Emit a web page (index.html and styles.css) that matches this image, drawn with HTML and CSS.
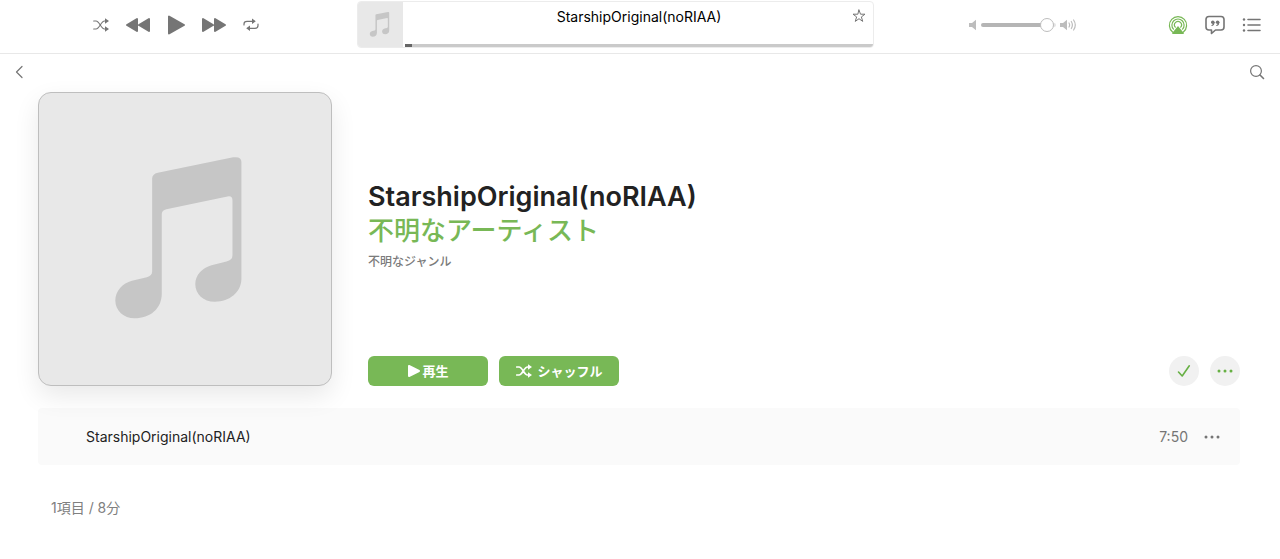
FILE: index.html
```html
<!DOCTYPE html>
<html lang="ja">
<head>
    <meta charset="UTF-8">
    <meta name="viewport" content="width=device-width, initial-scale=1.0">
    <title>StarshipOriginal(noRIAA)</title>
    <link rel="stylesheet" href="styles.css">
</head>
<body>

<svg class="symbols" width="0" height="0" aria-hidden="true">
    <symbol id="note" viewBox="0 0 880 880">
        <path d="M341 258Q341 244 358 240L585 194Q610 190 610 208V560C610 600 575 629 530 629C495 629 471 605 471 576C471 548 492 527 520 519L565 508Q583 504 583 490V323Q583 309 568 312L384 350Q370 353 370 365V605C370 650 335 679 288 679C255 679 230 655 230 625C230 597 252 573 280 566L325 555Q341 551 341 538Z"/>
    </symbol>
    <symbol id="shuffle" viewBox="0 0 16 14">
        <path class="line" d="M.7 3H3C6.5 3 8 11 11.5 11H13M.7 11H3C6.5 11 8 3 11.5 3H13"/>
        <path d="M12 .2L16 3L12 5.8ZM12 8.2L16 11L12 13.8Z"/>
    </symbol>
    <symbol id="dots" viewBox="0 0 16 4">
        <circle cx="2" cy="2" r="1.5"/><circle cx="8" cy="2" r="1.5"/><circle cx="14" cy="2" r="1.5"/>
    </symbol>
</svg>

<header class="player">
    <div class="controls">
        <button class="icon-button" aria-label="シャッフル"><svg width="16" height="14"><use href="#shuffle"/></svg></button>
        <button class="icon-button" aria-label="前へ">
            <svg width="26" height="16" viewBox="0 0 26 16"><path class="solid" d="M12 2V14L2 8ZM24 2V14L14 8Z"/></svg>
        </button>
        <button class="icon-button" aria-label="再生">
            <svg width="18" height="20" viewBox="0 0 18 20"><path class="solid" d="M2 1.5V18.5L17 10Z"/></svg>
        </button>
        <button class="icon-button" aria-label="次へ">
            <svg width="26" height="16" viewBox="0 0 26 16"><path class="solid" d="M2 2V14L12 8ZM14 2V14L24 8Z"/></svg>
        </button>
        <button class="icon-button" aria-label="リピート">
            <svg width="16" height="14" viewBox="0 0 16 14">
                <path class="line" d="M1 7V6Q1 3.3 4 3.3H10M15 6V7.5Q15 10.3 12 10.3H6"/>
                <path d="M9 .6L12.8 3.3L9 6ZM7 7.6L3.2 10.3L7 13Z"/>
            </svg>
        </button>
    </div>

    <div class="now-playing">
        <svg class="thumb"><use href="#note"/></svg>
        <div class="now-playing-body">
            <div class="now-playing-title">StarshipOriginal(noRIAA)</div>
            <button class="icon-button star" aria-label="お気に入り">
                <svg width="14" height="14" viewBox="0 0 14 14"><path class="line thin" d="M7 1L8.5 5.2H13L9.4 7.9L10.7 12.4L7 9.7L3.3 12.4L4.6 7.9L1 5.2H5.5Z"/></svg>
            </button>
            <div class="progress"><div class="progress-value"></div></div>
        </div>
    </div>

    <div class="side">
        <div class="volume">
            <svg width="8" height="12" viewBox="0 0 8 12"><path d="M0 4H3L7 .8V11.2L3 8H0Z"/></svg>
            <input type="range" min="0" max="100" value="97" aria-label="音量">
            <svg width="17" height="12" viewBox="0 0 17 12">
                <path d="M0 4H3L7 .8V11.2L3 8H0Z"/>
                <path class="line" d="M9 4Q10.3 6 9 8M11.3 2.5Q13.5 6 11.3 9.5M13.6 1Q17 6 13.6 11"/>
            </svg>
        </div>
        <div class="tools">
            <button class="icon-button green" aria-label="AirPlay">
                <svg width="20" height="20" viewBox="0 0 20 20">
                    <path class="line" d="M4.6 17A8.6 8.6 0 1 1 15.4 17M5.5 14.2A6.1 6.1 0 1 1 14.5 14.2M7.3 12.2A3.5 3.5 0 1 1 12.7 12.2"/>
                    <path d="M10 11L15.8 18Q16.2 19 15 19H5Q3.8 19 4.2 18Z"/>
                </svg>
            </button>
            <button class="icon-button" aria-label="歌詞">
                <svg width="20" height="20" viewBox="0 0 20 20">
                    <path class="line thick" d="M4 1.5H16Q19 1.5 19 4.5V12Q19 15 16 15H10.5L6.5 18.5V15H4Q1 15 1 12V4.5Q1 1.5 4 1.5Z"/>
                    <circle cx="7.8" cy="7.2" r="1.8"/><circle cx="12.6" cy="7.2" r="1.8"/>
                    <path class="line" d="M9 7.5Q9 9.7 7 10.5M13.8 7.5Q13.8 9.7 11.8 10.5"/>
                </svg>
            </button>
            <button class="icon-button" aria-label="次に再生">
                <svg width="20" height="16" viewBox="0 0 20 16">
                    <path class="line thick" d="M6 2.5H18M6 8H18M6 13.5H18"/>
                    <circle cx="2" cy="2.5" r="1.2"/><circle cx="2" cy="8" r="1.2"/><circle cx="2" cy="13.5" r="1.2"/>
                </svg>
            </button>
        </div>
    </div>
</header>

<nav class="nav">
    <button class="icon-button" aria-label="戻る">
        <svg width="8" height="14" viewBox="0 0 8 14"><path class="line" d="M7 1.5L1.5 7L7 12.5"/></svg>
    </button>
    <button class="icon-button" aria-label="検索">
        <svg width="16" height="16" viewBox="0 0 16 16"><circle class="line" cx="7" cy="7" r="5.4"/><path class="line thick" d="M11 11L14.5 14.5"/></svg>
    </button>
</nav>

<main class="content">
    <section class="album">
        <svg class="cover"><use href="#note"/></svg>
        <div class="info">
            <div class="info-text">
                <h1>StarshipOriginal(noRIAA)</h1>
                <a class="artist" href="#">不明なアーティスト</a>
                <div class="genre">不明なジャンル</div>
            </div>
            <div class="actions">
                <button class="action">
                    <svg width="13" height="12" viewBox="0 0 13 12"><path class="solid" d="M2 1V11L12 6Z"/></svg>
                    再生
                </button>
                <button class="action shuffle">
                    <svg width="18" height="14" viewBox="0 0 16 14"><use href="#shuffle"/></svg>
                    シャッフル
                </button>
                <button class="round first" aria-label="追加済み">
                    <svg width="14" height="14" viewBox="0 0 14 14"><path class="line thick" d="M1.5 8L5.2 12L12.3 1.8"/></svg>
                </button>
                <button class="round" aria-label="その他">
                    <svg width="16" height="4"><use href="#dots"/></svg>
                </button>
            </div>
        </div>
    </section>

    <div class="track">
        <div class="track-title">StarshipOriginal(noRIAA)</div>
        <div class="track-time">7:50</div>
        <button class="icon-button" aria-label="その他"><svg width="16" height="4"><use href="#dots"/></svg></button>
    </div>

    <p class="summary">1項目 / 8分</p>
</main>

</body>
</html>
```
FILE: styles.css
```css
* {
    box-sizing: border-box;
}

body {
    margin: 0;
    background: #fff;
    color: #222;
    font-family: Inter, "Noto Sans CJK JP", sans-serif;
    font-size: 14px;
    line-height: 20px;
}

svg {
    display: block;
    flex: none;
    fill: currentColor;
}

.symbols {
    position: absolute;
}

.line {
    fill: none;
    stroke: currentColor;
    stroke-width: var(--stroke, 1.2);
    stroke-linecap: round;
    stroke-linejoin: round;
}

.thin {
    stroke-width: 1;
}

.thick {
    stroke-width: 1.6;
}

.solid {
    stroke: currentColor;
    stroke-width: 2;
    stroke-linejoin: round;
}

button {
    display: flex;
    align-items: center;
    justify-content: center;
    padding: 0;
    border: none;
    font: inherit;
    cursor: pointer;
}

.icon-button {
    background: none;
    color: #757575;
}

.green {
    color: #78b856;
}

/* player bar */
.player {
    display: grid;
    grid-template-columns: 357fr 517fr 406fr;
    height: 54px;
    border-bottom: 1px solid #e8e8e8;
}

.controls {
    display: flex;
    align-items: center;
    justify-content: center;
    gap: 16px;
    padding: 0 6px 4px 0;
}

.now-playing {
    display: flex;
    height: 47px;
    margin-top: 1px;
    border: 1px solid #ececec;
    border-radius: 4px;
    overflow: hidden;
}

.thumb {
    width: 45px;
    height: 45px;
    background: #e8e8e8;
    color: #c6c6c6;
}

.now-playing-body {
    position: relative;
    flex: 1;
    padding: 5px 0 0 2px;
}

.now-playing-title {
    color: #000;
    text-align: center;
}

.star {
    position: absolute;
    top: 7px;
    right: 7px;
}

.progress {
    position: absolute;
    left: 2px;
    right: 0;
    bottom: 0;
    height: 3px;
    background: #cacaca;
}

.progress-value {
    width: 7px;
    height: 3px;
    background: #666;
}

.side {
    display: flex;
    align-items: center;
    justify-content: space-between;
    padding: 0 18px 4px 95px;
}

.volume {
    display: flex;
    align-items: center;
    gap: 4px;
    color: #bdbdbd;
}

.volume input {
    appearance: none;
    width: 75px;
    height: 14px;
    margin: 0;
    background: none;
}

.volume input::-webkit-slider-runnable-track {
    height: 4px;
    border-radius: 2px;
    background: linear-gradient(to right, #b5b5b5 90%, #e4e4e4 90%);
}

.volume input::-webkit-slider-thumb {
    appearance: none;
    width: 14px;
    height: 14px;
    margin-top: -5px;
    border: 1px solid #bdbdbd;
    border-radius: 50%;
    background: #fff;
}

.tools {
    display: flex;
    align-items: center;
    gap: 17px;
}

/* back and search */
.nav {
    display: flex;
    align-items: center;
    justify-content: space-between;
    height: 38px;
    padding: 0 15px 2px;
}

/* album */
.content {
    padding: 0 40px 32px 38px;
}

.album {
    display: flex;
    gap: 36px;
}

.cover {
    width: 294px;
    height: 294px;
    border: 1px solid #bebebe;
    border-radius: 13px;
    background: #e8e8e8;
    color: #c6c6c6;
    box-shadow: 0 10px 26px rgba(0, 0, 0, 0.09);
}

.info {
    display: flex;
    flex: 1;
    flex-direction: column;
}

.info-text {
    display: flex;
    flex: 1;
    flex-direction: column;
    align-items: flex-start;
    justify-content: center;
    padding-top: 4px;
}

h1 {
    margin: 0;
    font-size: 27px;
    font-weight: 600;
    line-height: 34px;
}

.artist {
    color: #78b856;
    font-size: 26px;
    font-weight: 500;
    line-height: 34px;
    text-decoration: none;
}

.genre {
    margin-top: 4px;
    color: #7b7b7b;
    font-size: 12px;
    font-weight: 500;
}

.actions {
    display: flex;
    gap: 11px;
}

.action {
    gap: 2px;
    width: 120px;
    height: 30px;
    border-radius: 6px;
    background: #78b856;
    color: #fff;
    font-size: 13px;
    font-weight: 700;
}

.shuffle {
    --stroke: 1.7;
    gap: 4px;
}

.round {
    width: 30px;
    height: 30px;
    border-radius: 50%;
    background: #f1f1f1;
    color: #67b044;
}

.first {
    margin-left: auto;
}

/* track list */
.track {
    display: flex;
    align-items: center;
    gap: 16px;
    height: 57px;
    margin-top: 22px;
    padding: 0 20px 0 48px;
    border-radius: 4px;
    background: #fafafa;
}

.track-title {
    flex: 1;
}

.track-time {
    color: #757575;
}

.summary {
    margin: 33px 0 0 13px;
    color: #808080;
}
```
